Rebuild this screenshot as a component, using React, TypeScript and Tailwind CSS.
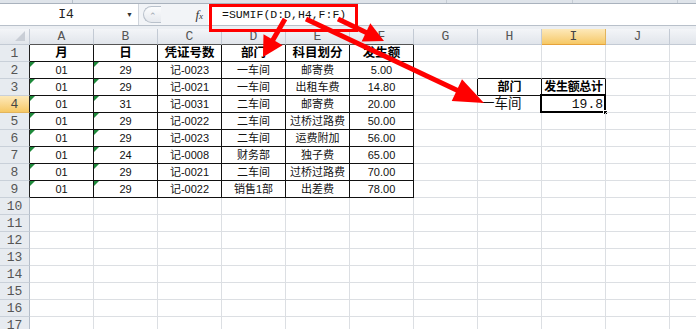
import React from "react";

const COLS = ["A", "B", "C", "D", "E", "F", "G", "H", "I", "J", ""];
const DATA: string[][] = [
  ["月", "日", "凭证号数", "部门", "科目划分", "发生额"],
  ["01", "29", "记-0023", "一车间", "邮寄费", "5.00"],
  ["01", "29", "记-0021", "一车间", "出租车费", "14.80"],
  ["01", "31", "记-0031", "二车间", "邮寄费", "20.00"],
  ["01", "29", "记-0022", "二车间", "过桥过路费", "50.00"],
  ["01", "29", "记-0023", "二车间", "运费附加", "56.00"],
  ["01", "24", "记-0008", "财务部", "独子费", "65.00"],
  ["01", "29", "记-0021", "二车间", "过桥过路费", "70.00"],
  ["01", "29", "记-0022", "销售1部", "出差费", "78.00"],
];

const inTable = (r: number, c: number) =>
  (r >= 1 && r <= 9 && c >= 0 && c <= 5) || (r === 3 && (c === 7 || c === 8));

function Arrow({ x1, y1, x2, y2, hl, hw }: { x1: number; y1: number; x2: number; y2: number; hl: number; hw: number }) {
  const dx = x2 - x1;
  const dy = y2 - y1;
  const len = Math.hypot(dx, dy);
  const ux = dx / len;
  const uy = dy / len;
  const bx = x2 - ux * hl;
  const by = y2 - uy * hl;
  const px = -uy;
  const py = ux;
  const pts = `${x2},${y2} ${bx + px * hw},${by + py * hw} ${bx - px * hw},${by - py * hw}`;
  return (
    <g>
      <line x1={x1} y1={y1} x2={bx + ux * 2} y2={by + uy * 2} stroke="#f00" strokeWidth={5} />
      <polygon points={pts} fill="#f00" />
    </g>
  );
}

function Cell({ r, c }: { r: number; c: number }) {
  const rightBlack = inTable(r, c) || inTable(r, c + 1);
  const bottomBlack = inTable(r, c) || inTable(r + 1, c);
  const rc = rightBlack ? "border-r-[#111]" : "border-r-[#dcdfe3]";
  const bc = bottomBlack ? "border-b-[#111]" : "border-b-[#dcdfe3]";
  let content: React.ReactNode = null;
  let green = false;
  if (r >= 1 && r <= 9 && c <= 5) {
    const v = DATA[r - 1][c];
    green = r >= 2 && c <= 1;
    content = (
      <span
        className={
          r === 1
            ? "font-bold text-[12.5px] text-black"
            : "text-[11px] text-[#111]"
        }
      >
        {v}
      </span>
    );
  }
  if (r === 3 && c === 7) content = <span className="font-bold text-[12px] text-black">部门</span>;
  if (r === 3 && c === 8) content = <span className="font-bold text-[12px] text-black tracking-[-0.3px]">发生额总计</span>;
  const isH4 = r === 4 && c === 7;
  const isI4 = r === 4 && c === 8;
  return (
    <div
      className={`relative shrink-0 w-[64px] h-[17px] border-r border-b ${rc} ${bc} flex items-center ${
        isH4 ? "justify-start pl-[3px]" : isI4 ? "justify-end pr-[2px]" : "justify-center"
      } font-['Liberation_Sans','Noto_Sans_CJK_SC',sans-serif] leading-none`}
    >
      {green && (
        <span className="absolute left-0 top-0 w-0 h-0 border-t-[5px] border-r-[5px] border-t-[#1e8a3b] border-r-transparent" />
      )}
      {content}
      {isH4 && <span className="text-[13.5px] text-[#111] whitespace-nowrap">一车间</span>}
      {isI4 && (
        <>
          <span className="font-['Liberation_Mono',monospace] text-[13px] text-[#111]">19.8</span>
          <span className="absolute -left-[2px] -top-[2px] w-[66px] h-[19px] border-2 border-black" />
          <span className="absolute -right-[3px] -bottom-[3px] w-[5px] h-[5px] bg-black border border-white" />
        </>
      )}
    </div>
  );
}

export default function App() {
  const rows = Array.from({ length: 17 }, (_, i) => i + 1);
  return (
    <div className="relative w-[696px] h-[329px] overflow-hidden bg-white select-none">
      {/* ribbon strip */}
      <div className="flex h-[4px] bg-[#dfe4ea] border-b border-[#a9b2bd]">
        <div className="w-[73px] border-r border-[#b7bfc9]" />
        <div className="w-[374px] border-r border-[#c5ccd4]" />
        <div className="w-[126px] border-r border-[#c5ccd4]" />
        <div className="w-[105px] border-r border-[#c5ccd4]" />
      </div>
      {/* formula bar */}
      <div className="flex h-[22px] bg-[#f2f4f7] border-b border-[#b8c0ca]">
        <div className="w-[139px] bg-white flex items-center border-r border-[#d0d5dc]">
          <span className="flex-1 text-center font-['Liberation_Mono',monospace] text-[13px] text-[#222] pl-[6px]">I4</span>
          <span className="w-[12px] text-[7px] text-[#333] leading-none">▼</span>
        </div>
        <div className="w-[69px] flex items-center">
          <div className="ml-[4px] w-[18px] h-[17px] rounded-l-full border border-r-0 border-[#b9c1cb] bg-gradient-to-b from-[#fbfcfd] to-[#e6e9ee] flex items-center justify-center">
            <span className="text-[9px] text-[#9aa3ad] leading-none mt-[2px]">⌃</span>
          </div>
          <span className="ml-auto mr-[5px] font-['Liberation_Serif',serif] italic text-[13px] text-[#333] leading-none">
            f<span className="text-[9px]">x</span>
          </span>
        </div>
        <div className="flex-1 bg-white flex items-center pl-[14px] font-['Liberation_Mono',monospace] text-[11.5px] text-[#111]">
          =SUMIF(D:D,H4,F:F)
        </div>
      </div>
      <div className="h-[3px] bg-[#eceff3]" />
      {/* column headers */}
      <div className="flex h-[16px] whitespace-nowrap">
        <div className="shrink-0 w-[30px] h-[16px] border-r border-b border-[#c3cad4] bg-gradient-to-b from-[#f3f5f8] to-[#e1e5eb] flex items-end justify-end pr-[4px] pb-[3px]">
          <svg width="10" height="10" viewBox="0 0 10 10">
            <polygon points="10,0 10,10 0,10" fill="#c9ced6" />
          </svg>
        </div>
        {COLS.map((c, i) => {
          const sel = c === "I";
          return (
            <div
              key={i}
              className={`shrink-0 w-[64px] h-[16px] border-r border-b flex items-center justify-center font-['Liberation_Mono',monospace] text-[13px] leading-none ${
                sel
                  ? "bg-gradient-to-b from-[#fde9b9] to-[#f6c864] border-r-[#e2b45c] border-b-[#e6a23a] text-[#444]"
                  : `bg-gradient-to-b from-[#f3f5f8] to-[#e1e5eb] border-r-[#c3cad4] ${inTable(1, i) ? "border-b-[#555]" : "border-b-[#c3cad4]"} text-[#555]`
              }`}
            >
              {c}
            </div>
          );
        })}
      </div>
      {/* rows */}
      {rows.map((r) => (
        <div key={r} className="flex h-[17px] whitespace-nowrap">
          <div
            className={`shrink-0 w-[30px] h-[17px] border-r border-b flex items-center justify-center font-['Liberation_Mono',monospace] text-[13px] leading-none ${
              r === 4
                ? "bg-gradient-to-b from-[#fde9b9] to-[#f6c864] border-b-[#e2b45c] text-[#444]"
                : "bg-[#e7ebf0] border-b-[#c9d0d9] text-[#555]"
            } ${inTable(r, 0) ? "border-r-[#222]" : r === 4 ? "border-r-[#e6a23a]" : "border-r-[#b4bdc9]"}`}
          >
            {r}
          </div>
          {COLS.map((_, c) => (
            <Cell key={c} r={r} c={c} />
          ))}
        </div>
      ))}
      {/* annotation overlay */}
      <div className="absolute left-[209px] top-[4px] w-[149px] h-[28px] border-[3px] border-[#ff0000] pointer-events-none" />
      <svg className="absolute left-0 top-0 pointer-events-none" width="696" height="329">
        <Arrow x1={285} y1={19} x2={263} y2={57} hl={20} hw={11} />
        <Arrow x1={338} y1={19} x2={384} y2={41} hl={20} hw={10} />
        <Arrow x1={306} y1={19} x2={484} y2={103} hl={30} hw={12} />
      </svg>
    </div>
  );
}
